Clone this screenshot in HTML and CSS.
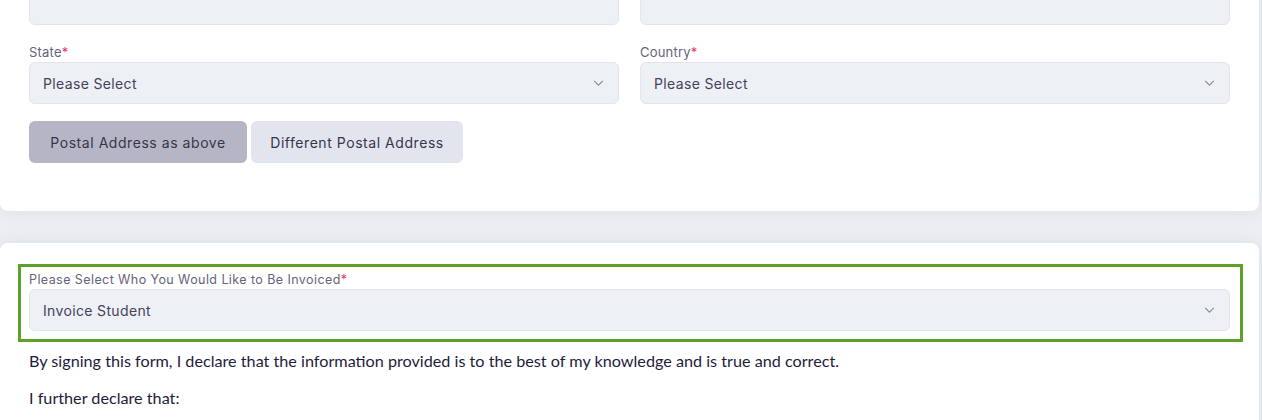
FILE: index.html
```html
<!DOCTYPE html>
<html>
<head>
<meta charset="utf-8">
<link rel="stylesheet" href="styles.css">
</head>
<body>
<div class="page">
  <section class="card card-top">
    <div class="grid">
      <div class="field"><div class="input"></div></div>
      <div class="field"><div class="input"></div></div>
      <div class="field spaced">
        <label class="label">State<span class="req">*</span></label>
        <div class="select"><span>Please Select</span><svg class="chev" viewBox="0 0 12 7"><path d="M1 1l5 5 5-5"/></svg></div>
      </div>
      <div class="field spaced">
        <label class="label">Country<span class="req">*</span></label>
        <div class="select"><span>Please Select</span><svg class="chev" viewBox="0 0 12 7"><path d="M1 1l5 5 5-5"/></svg></div>
      </div>
    </div>
    <div class="btns">
      <button class="btn btn-active">Postal Address as above</button>
      <button class="btn btn-alt">Different Postal Address</button>
    </div>
  </section>

  <section class="card card-bottom">
    <div class="highlight">
      <label class="label small">Please Select Who You Would Like to Be Invoiced<span class="req">*</span></label>
      <div class="select"><span>Invoice Student</span><svg class="chev" viewBox="0 0 12 7"><path d="M1 1l5 5 5-5"/></svg></div>
    </div>
    <p class="text first">By signing this form, I declare that the information provided is to the best of my knowledge and is true and correct.</p>
    <p class="text">I further declare that:</p>
  </section>
</div>
</body>
</html>
```

FILE: styles.css
```css
html, body {
  margin: 0;
  padding: 0;
}
body {
  background: #eceef1;
  font-family: "Inter", "Open Sans", sans-serif;
  overflow: hidden;
  height: 420px;
}
.page {
  padding-right: 3px;
}
.card {
  background: #ffffff;
  border-radius: 8px;
  box-shadow: 0 0 18px rgba(30, 40, 60, 0.07);
  padding: 0 29px;
}
.card-top {
  margin-top: -40px;
  padding-top: 23px;
  padding-bottom: 48px;
}
.grid {
  display: grid;
  grid-template-columns: 590px 590px;
  column-gap: 21px;
}
.input {
  height: 40px;
  background: #edf0f4;
  border: 1px solid #e2e5ec;
  border-radius: 6px;
}
.spaced {
  margin-top: 17px;
}
.label {
  display: block;
  font-size: 13px;
  line-height: 20px;
  color: #66637c;
  letter-spacing: 0.2px;
}
.label.small {
  font-size: 12.5px;
  line-height: 18px;
  letter-spacing: 0.42px;
}
.req {
  color: #e8355a;
}
.select {
  height: 40px;
  background: #edf0f4;
  border: 1px solid #e2e5ec;
  border-radius: 6px;
  display: flex;
  align-items: center;
  justify-content: space-between;
  padding: 0 14px 0 13px;
  font-size: 14px;
  font-weight: 400;
  color: #44425c;
  letter-spacing: 0.35px;
}
.chev {
  width: 11px;
  height: 6px;
  fill: none;
  stroke: #8b8a9c;
  stroke-width: 1.3;
}
.btns {
  display: flex;
  gap: 4px;
  margin-top: 17px;
}
.btn {
  height: 42px;
  border: none;
  border-radius: 6px;
  background: #e3e5ee;
  color: #37354d;
  font-family: "Inter", "Open Sans", sans-serif;
  font-size: 14px;
  font-weight: 400;
  letter-spacing: 0.55px;
  padding: 0;
}
.btn-active {
  background: #b6b5c5;
  width: 218px;
}
.btn-alt {
  width: 212px;
}
.card-bottom {
  margin-top: 32px;
  padding-top: 21px;
  padding-bottom: 40px;
}
.highlight {
  border: 3px solid #5ea128;
  margin-left: -11px;
  margin-right: -13px;
  padding: 4px 10px 8px 8px;
}
.text {
  margin: 0;
  font-family: "Lato", "Liberation Sans", sans-serif;
  font-size: 16.2px;
  color: #1f1c3c;
  line-height: 20px;
}
.text.first {
  margin-top: 9px;
}
.text + .text {
  margin-top: 17px;
}
```
